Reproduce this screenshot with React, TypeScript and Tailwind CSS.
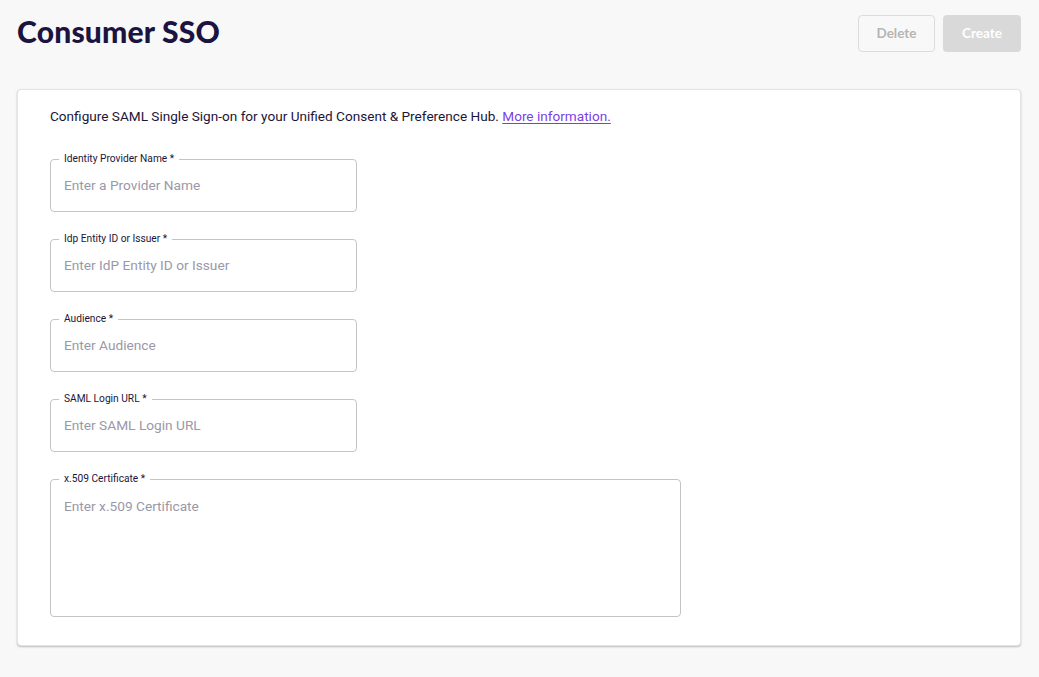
import React from "react";

type Field = {
  label: string;
  placeholder: string;
  multiline?: boolean;
};

const fields: Field[] = [
  { label: "Identity Provider Name", placeholder: "Enter a Provider Name" },
  { label: "Idp Entity ID or Issuer", placeholder: "Enter IdP Entity ID or Issuer" },
  { label: "Audience", placeholder: "Enter Audience" },
  { label: "SAML Login URL", placeholder: "Enter SAML Login URL" },
  { label: "x.509 Certificate", placeholder: "Enter x.509 Certificate", multiline: true },
];

const OutlinedField = ({ label, placeholder, multiline }: Field) => (
  <div
    className={`relative rounded-[4px] border border-[#c4c4c4] bg-white ${
      multiline ? "w-[631px] h-[138px]" : "w-[307px] h-[53px]"
    }`}
  >
    <label className="absolute left-[8px] top-[-8px] bg-white px-[5px] text-[10.2px] leading-[14px] text-[#1b1638]">
      {label} *
    </label>
    {multiline ? (
      <textarea
        placeholder={placeholder}
        className="block h-full w-full resize-none bg-transparent px-[13px] pt-[16px] text-[13.7px] text-[#1b1638] outline-none placeholder:text-[#9a98a8]"
      />
    ) : (
      <input
        placeholder={placeholder}
        className="block h-full w-full bg-transparent px-[13px] pb-[1px] text-[13.7px] text-[#1b1638] outline-none placeholder:text-[#9a98a8]"
      />
    )}
  </div>
);

export default function App() {
  return (
    <div
      className="min-h-screen bg-[#f8f8f8] pl-[17px] pr-[18px] pt-[15px] pb-[30px]"
      style={{ fontFamily: "Roboto, 'Liberation Sans', sans-serif" }}
    >
      <div className="flex items-start justify-between">
        <h1
          className="text-[30px] leading-[32px] font-black tracking-[0.2px] text-[#1b1340]"
          style={{ fontFamily: "Lato, 'DejaVu Sans', sans-serif" }}
        >
          Consumer SSO
        </h1>
        <div
          className="flex gap-[8px]"
          style={{ fontFamily: "Lato, 'DejaVu Sans', sans-serif" }}
        >
          <button className="h-[37px] w-[77px] rounded-[4px] border border-[#dcdcdc] bg-transparent text-[13.5px] font-bold text-[#b5b5b5]">
            Delete
          </button>
          <button className="h-[37px] w-[78px] rounded-[4px] bg-[#d9d9d9] text-[13.5px] font-bold text-white">
            Create
          </button>
        </div>
      </div>

      <div className="mt-[37px] rounded-[4px] border border-[#e4e4e4] bg-white px-[32px] pt-[16px] pb-[28px] shadow-[0_1px_2px_rgba(0,0,0,0.25)]">
        <p className="text-[13.6px] leading-[20px] text-[#1b1638]">
          Configure SAML Single Sign-on for your Unified Consent &amp; Preference Hub.{" "}
          <a href="#" className="text-[#7b3fe4] underline underline-offset-2">
            More information.
          </a>
        </p>
        <div className="mt-[33px] flex flex-col gap-[27px]">
          {fields.map((f) => (
            <OutlinedField key={f.label} {...f} />
          ))}
        </div>
      </div>
    </div>
  );
}
